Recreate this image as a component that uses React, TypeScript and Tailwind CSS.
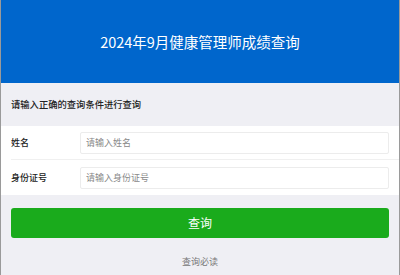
const font = { fontFamily: '"Noto Sans CJK SC", "Noto Sans", sans-serif' };

export default function App() {
  return (
    <div
      className="min-h-[275px] border-x border-[#9a9a9a] bg-[#efeff4] font-['Noto_Sans_CJK_SC',sans-serif]"
      style={font}
    >
      <header className="flex h-[83px] items-center justify-center bg-[#0066cc]">
        <h1 className="text-[14.5px] font-normal text-white">2024年9月健康管理师成绩查询</h1>
      </header>

      <div className="flex h-[43px] items-center px-[10px]">
        <p className="text-[9.3px] font-medium text-[#222]">请输入正确的查询条件进行查询</p>
      </div>

      <div className="bg-white pl-[10px]">
        <div className="flex h-[34px] items-center border-b border-[#f0f0f0] pr-[10px]">
          <label className="w-[69px] text-[9px] font-medium text-[#222]">姓名</label>
          <input
            className="h-[22px] flex-1 rounded-[2px] border border-[#ececec] px-[5px] text-[9px] outline-none placeholder:text-[#888]"
            placeholder="请输入姓名"
          />
        </div>
        <div className="flex h-[35px] items-center pr-[10px]">
          <label className="w-[69px] text-[9px] font-medium text-[#222]">身份证号</label>
          <input
            className="h-[22px] flex-1 rounded-[2px] border border-[#ececec] px-[5px] text-[9px] outline-none placeholder:text-[#888]"
            placeholder="请输入身份证号"
          />
        </div>
      </div>

      <div className="px-[10px] pt-[13px]">
        <button
          type="button"
          className="h-[30px] w-full rounded-[3px] bg-[#1aab1c] text-[12px] text-white"
        >
          查询
        </button>
        <p className="mt-[17px] text-center text-[9px] text-[#777]">查询必读</p>
      </div>
    </div>
  );
}
